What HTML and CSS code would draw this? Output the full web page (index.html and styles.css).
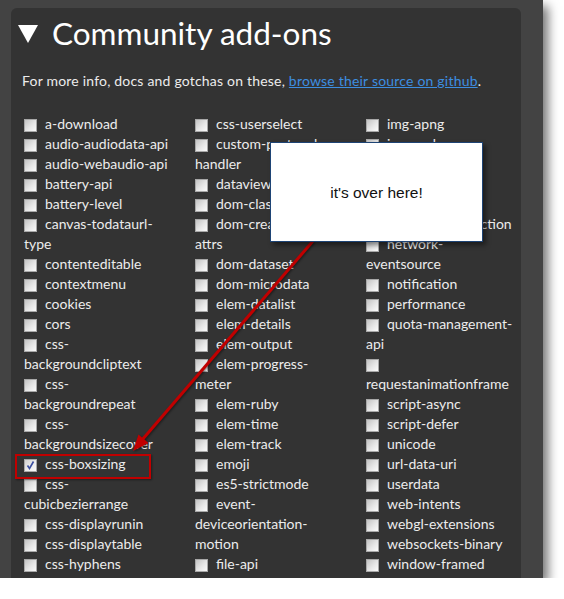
FILE: index.html
```html
<!DOCTYPE html>
<html>
<head>
<meta charset="utf-8">
<link rel="stylesheet" href="styles.css">
</head>
<body>
<div class="shot">
  <div class="panel">
    <h2 class="title">
      <svg class="tri" width="20" height="18" viewBox="0 0 20 18"><polygon points="0,0 20,0 10,18" fill="#fff"/></svg>
      <span>Community add-ons</span>
    </h2>
    <p class="info">For more info, docs and gotchas on these, <a href="#">browse their source on github</a>.</p>
    <div class="cols">
      <div class="col">
        <div class="item"><i class="cb"></i>a-download</div>
        <div class="item"><i class="cb"></i>audio-audiodata-api</div>
        <div class="item"><i class="cb"></i>audio-webaudio-api</div>
        <div class="item"><i class="cb"></i>battery-api</div>
        <div class="item"><i class="cb"></i>battery-level</div>
        <div class="item"><i class="cb"></i>canvas-todataurl-<br>type</div>
        <div class="item"><i class="cb"></i>contenteditable</div>
        <div class="item"><i class="cb"></i>contextmenu</div>
        <div class="item"><i class="cb"></i>cookies</div>
        <div class="item"><i class="cb"></i>cors</div>
        <div class="item"><i class="cb"></i>css-<br>backgroundcliptext</div>
        <div class="item"><i class="cb"></i>css-<br>backgroundrepeat</div>
        <div class="item"><i class="cb"></i>css-<br>backgroundsizecover</div>
        <div class="item"><i class="cb checked"><svg width="11" height="11" viewBox="0 0 11 11"><path d="M2.5 5.5 L4.5 8.5 L8.5 1.5" fill="none" stroke="#3a4ea0" stroke-width="1.6"/></svg></i>css-boxsizing</div>
        <div class="item"><i class="cb"></i>css-<br>cubicbezierrange</div>
        <div class="item"><i class="cb"></i>css-displayrunin</div>
        <div class="item"><i class="cb"></i>css-displaytable</div>
        <div class="item"><i class="cb"></i>css-hyphens</div>
      </div>
      <div class="col">
        <div class="item"><i class="cb"></i>css-userselect</div>
        <div class="item"><i class="cb"></i>custom-protocol-<br>handler</div>
        <div class="item"><i class="cb"></i>dataview</div>
        <div class="item"><i class="cb"></i>dom-classlist</div>
        <div class="item"><i class="cb"></i>dom-createElement-<br>attrs</div>
        <div class="item"><i class="cb"></i>dom-dataset</div>
        <div class="item"><i class="cb"></i>dom-microdata</div>
        <div class="item"><i class="cb"></i>elem-datalist</div>
        <div class="item"><i class="cb"></i>elem-details</div>
        <div class="item"><i class="cb"></i>elem-output</div>
        <div class="item"><i class="cb"></i>elem-progress-<br>meter</div>
        <div class="item"><i class="cb"></i>elem-ruby</div>
        <div class="item"><i class="cb"></i>elem-time</div>
        <div class="item"><i class="cb"></i>elem-track</div>
        <div class="item"><i class="cb"></i>emoji</div>
        <div class="item"><i class="cb"></i>es5-strictmode</div>
        <div class="item"><i class="cb"></i>event-<br>deviceorientation-<br>motion</div>
        <div class="item"><i class="cb"></i>file-api</div>
      </div>
      <div class="col">
        <div class="item"><i class="cb"></i>img-apng</div>
        <div class="item"><i class="cb"></i>img-webp</div>
        <div class="item"><i class="cb"></i>json</div>
        <div class="item"><i class="cb"></i>lists-reversed</div>
        <div class="item"><i class="cb"></i>mathml</div>
        <div class="item"><i class="cb"></i>network-connection</div>
        <div class="item"><i class="cb"></i>network-<br>eventsource</div>
        <div class="item"><i class="cb"></i>notification</div>
        <div class="item"><i class="cb"></i>performance</div>
        <div class="item"><i class="cb"></i>quota-management-<br>api</div>
        <div class="item"><i class="cb"></i><br>requestanimationframe</div>
        <div class="item"><i class="cb"></i>script-async</div>
        <div class="item"><i class="cb"></i>script-defer</div>
        <div class="item"><i class="cb"></i>unicode</div>
        <div class="item"><i class="cb"></i>url-data-uri</div>
        <div class="item"><i class="cb"></i>userdata</div>
        <div class="item"><i class="cb"></i>web-intents</div>
        <div class="item"><i class="cb"></i>webgl-extensions</div>
        <div class="item"><i class="cb"></i>websockets-binary</div>
        <div class="item"><i class="cb"></i>window-framed</div>
      </div>
    </div>
  </div>
  <div class="highlight"></div>
  <svg class="arrow" width="543" height="578" viewBox="0 0 543 578">
    <line x1="313" y1="241" x2="142" y2="440" stroke="#c00000" stroke-width="3"/>
    <polygon points="133,451 148.5,443 138.5,434.5" fill="#c00000"/>
  </svg>
  <div class="popup">it's over here!</div>
</div>
</body>
</html>
```
FILE: styles.css
```css
html, body {
  margin: 0;
  padding: 0;
  background: #ffffff;
}
.shot {
  position: relative;
  width: 543px;
  height: 578px;
  background: #434343;
  overflow: hidden;
  box-shadow: 5px 6px 10px rgba(0, 0, 0, 0.55);
  padding: 8px 0 0 11px;
  box-sizing: border-box;
}
.panel {
  width: 510px;
  height: 600px;
  background: #333333;
  border-radius: 6px 6px 0 0;
  padding: 5px 0 0 13px;
  box-sizing: border-box;
  font-family: Lato, "Open Sans", sans-serif;
  color: #ececec;
}
.title {
  display: flex;
  align-items: center;
  margin: 0;
  height: 40px;
  line-height: 40px;
  font-size: 31.5px;
  font-weight: normal;
  color: #ffffff;
  margin-left: -6px;
}
.tri {
  margin-right: 14px;
  margin-top: 2px;
}
.info {
  margin: 18px 0 0 -2px;
  font-size: 14px;
  line-height: 20px;
  letter-spacing: 0.2px;
}
.info a {
  color: #3d8ee0;
  text-decoration: underline;
}
.cols {
  display: grid;
  grid-template-columns: 171px 171px 155px;
  margin-top: 23px;
}
.item {
  font-size: 14px;
  line-height: 20px;
  white-space: nowrap;
}
.cb {
  display: inline-block;
  width: 13px;
  height: 13px;
  box-sizing: border-box;
  border: 1px solid #a8a8a8;
  background: linear-gradient(135deg, #c4c4c4 0%, #e6e6e6 55%, #fafafa 100%);
  vertical-align: -3px;
  margin-right: 8px;
  position: relative;
}
.cb svg {
  display: block;
}
.checked {
  background: linear-gradient(135deg, #d0d0d0 0%, #ececec 55%, #fafafa 100%);
}
.highlight {
  position: absolute;
  left: 15px;
  top: 454px;
  width: 136px;
  height: 25px;
  border: 2px solid #c00000;
  box-sizing: border-box;
  box-shadow: 1px 1px 2px rgba(0, 0, 0, 0.4);
}
.arrow {
  position: absolute;
  left: 0;
  top: 0;
  filter: drop-shadow(1px 1px 1px rgba(0, 0, 0, 0.45));
}
.popup {
  position: absolute;
  left: 270px;
  top: 142px;
  width: 213px;
  height: 100px;
  box-sizing: border-box;
  background: #ffffff;
  border: 1px solid #1e4475;
  box-shadow: 3px 3px 5px rgba(0, 0, 0, 0.45);
  display: flex;
  align-items: center;
  justify-content: center;
  padding-top: 2px;
  font-family: "Liberation Sans", Arial, sans-serif;
  font-size: 15.5px;
  color: #111111;
}
```
